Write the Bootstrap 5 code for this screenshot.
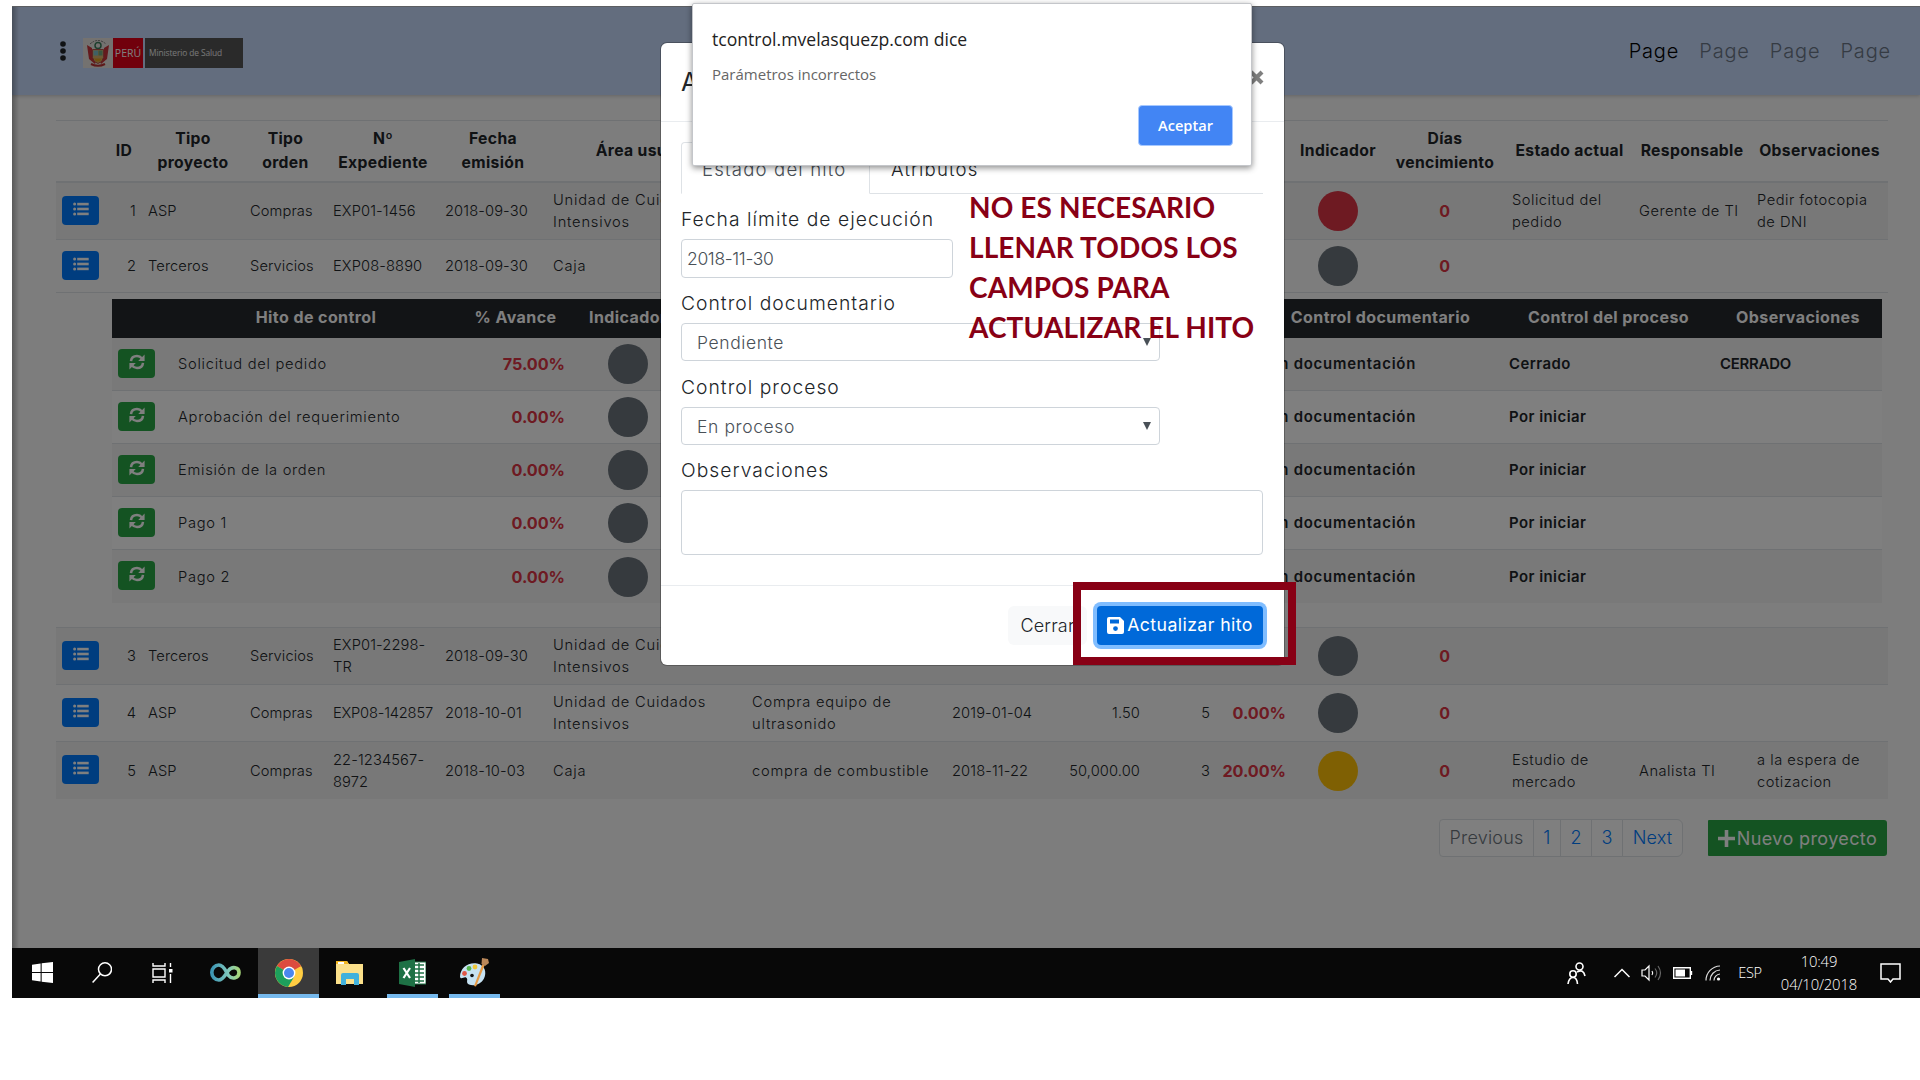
<!DOCTYPE html>
<html lang="es">
<head>
<meta charset="utf-8">
<meta name="viewport" content="width=device-width, initial-scale=1">
<title>Control de proyectos</title>
<link href="https://cdn.jsdelivr.net/npm/bootstrap@5.3.0/dist/css/bootstrap.min.css" rel="stylesheet">
<style>
:root{--ui:"Inter","Open Sans",sans-serif;--seg:"Open Sans","Noto Sans",sans-serif}
html,body{height:1080px;overflow:hidden}
body{background:#fff;font-family:var(--ui);font-weight:300;color:#212529}
.desk{margin:6px 0 0 12px;height:992px;position:relative}
.app{height:942px;background:#fafafa;position:relative;overflow:hidden;border-top:1px solid #b8bcc4}
.app::after{content:"";position:absolute;left:0;top:0;bottom:0;width:7px;background:linear-gradient(90deg,rgba(0,0,0,.28),transparent)}
.topbar{height:88px;background:#c6dafc;padding:0 29px 0 48px;box-shadow:0 1px 4px rgba(0,0,0,.2)}
.topbar .nav{gap:20px}
.topbar .nav-link{font-size:20px;letter-spacing:.85px;color:#6b7687;padding:0;line-height:30px;margin-top:0}
.topbar .nav-link.active{color:#000}
.brandbox{width:160px;height:30px;margin-left:17px;margin-top:3px}
.brandbox .esc{width:30px;background:#e8e4e0}
.brandbox .pe{width:30px;background:#e20018;color:#fff;font:400 10.5px var(--seg)}
.brandbox .min{width:98px;background:#555;color:#eee;font:400 8.4px var(--seg);letter-spacing:-.1px;padding-left:4px}
.main{padding:25px 32px 0 44px}
.grid{table-layout:fixed;width:1832px;margin:0;font-size:14.7px;line-height:22px;letter-spacing:.1px;border-collapse:separate;border-spacing:0;color:#212529}
.grid>thead>tr>th{height:63px;border-top:1px solid #dee2e6;border-bottom:2px solid #dee2e6;text-align:center;vertical-align:middle;font-weight:700;font-size:15.7px;line-height:24px;padding:0;white-space:nowrap;letter-spacing:.35px}
.grid>tbody>tr>td{height:57px;padding:0 6px;vertical-align:middle;white-space:nowrap;border-bottom:1px solid #dee2e6}
.grid>tbody>tr>td:nth-child(7),.grid>tbody>tr>td:nth-child(8){letter-spacing:.78px}
.grid>tbody>tr>td:nth-child(n+14){letter-spacing:.5px}
.grid>tbody>tr.r2>td{height:53px}
.grid>tbody>tr.odd>td{background:#f0f0f0}
.grid>tbody>tr:last-child>td{border-bottom:0}
.grid>tbody>tr.detail>td{height:335px;padding:6px 6px 0 56px;vertical-align:top}
.sub{table-layout:fixed;width:1770px;margin:0;border-collapse:separate;border-spacing:0;background:#fff;color:#212529}
.sub th{height:39px;background:#24282c;color:#fff;text-align:center;font-size:16px;font-weight:700;letter-spacing:.42px;padding:0 0 3px;white-space:nowrap}
.sub td{height:53px;padding:0 6px;vertical-align:middle;border-bottom:1px solid #dee2e6;white-space:nowrap}
.sub td:nth-child(2){letter-spacing:.72px}
.sub tr:last-child td{border-bottom:0}
.sub tbody tr:nth-child(odd) td{background:#f2f2f2}
.sub td.fw{font-weight:600;font-size:14.9px;letter-spacing:.48px}
.sub td.doc{letter-spacing:.8px}
.sub td.caps{letter-spacing:-.2px}
.pct{color:#dc3545!important;font-weight:700;font-size:16.2px;text-align:right;letter-spacing:-.05px}
.zero{color:#dc3545!important;font-weight:700;font-size:16px;text-align:center}
.dot{display:block;width:40px;height:40px;border-radius:50%;background:#6c757d;margin:0 auto}
.dot.red{background:#dc3545}.dot.yel{background:#ffc107}
.ibtn{display:flex;align-items:center;justify-content:center;width:37px;height:29px;padding:0 0 3px;margin-bottom:2px;border:0;border-radius:4px;background:#007bff;color:#fff}
.ibtn.grn{background:#28a745}
.pager{height:38px}
.pager .page-link{height:38px;padding:0 0;font-size:18px;line-height:36px;text-align:center;color:#007bff;background:#fff;border-color:#dee2e6;border-radius:0;letter-spacing:.2px}
.pager .disabled .page-link{color:#6c757d;background:#fff;border-radius:4px 0 0 4px}
.newbtn{width:179px;height:36px;margin-left:25px;background:#28a745;color:#fff;font-size:18px;letter-spacing:.38px;font-weight:400;border:0;border-radius:1px 3px 3px 1px;padding:0;gap:2px}
.shade{position:absolute;left:0;right:0;top:0;height:942px;background:rgba(0,0,0,.5)}
.hito{position:absolute;left:649px;top:37px;width:623px;height:622px;background:#fff;border-radius:6px;box-shadow:0 0 0 1px rgba(0,0,0,.25)}
.hito .top{height:79px;padding:0 20px;border-bottom:1px solid #e9ecef}
.hito .top h5{font-size:25px;font-weight:400}
.hito .body{height:463px;padding:20px 21px 0 20px}
.tabs{height:52px;border-bottom:1px solid #dee2e6}
.tabs .nav-link{height:52px;padding:11px 20px 0;line-height:30px;font-size:18.6px;letter-spacing:1.15px;color:#212529;border-radius:4px 4px 0 0;white-space:nowrap}
.tabs .nav-link.active{width:189px;color:#495057;border-color:#dee2e6 #dee2e6 #fff}
.hito label{display:block;font-size:19.3px;letter-spacing:1.02px;line-height:30px;color:#212529;white-space:nowrap}
.hito .ctl{border:1px solid #ced4da;border-radius:4px;color:#495057;font-size:17.5px;letter-spacing:.6px;height:39px;padding:0 5px;line-height:37px;background:#fff}
.hito .date{width:272px;letter-spacing:-.35px}
.hito .sel{width:479px;padding:0 8px 0 15px;height:38px}
.hito .foot{height:79px;border-top:1px solid #e9ecef;padding:1px 21px 0 0;gap:10px}
.cer{width:79px;height:39px;background:#f8f9fa;border:0;padding:0;font-size:18px;letter-spacing:.2px;font-weight:300;color:#212529}
.act{width:166px;height:39px;background:#0069d9;border:0;padding:0;color:#fff;font-size:17.7px;letter-spacing:.42px;font-weight:400;border-radius:4px;box-shadow:0 0 0 4px #80bdff;white-space:nowrap;gap:3px}
.mark-box{position:absolute;left:1061px;top:576px;width:223px;height:83px;border:8px solid #880015}
.note{position:absolute;left:957px;top:181px;font:700 28px/40px Lato,sans-serif;letter-spacing:.12px;color:#880015;white-space:nowrap}
.alertbox{position:absolute;left:680px;top:-3px;width:560px;height:163px;background:#fff;border:1px solid #c4c6ca;border-radius:2px;box-shadow:0 2px 6px rgba(0,0,0,.45);font-family:var(--seg);padding:20px 18px 18px 19px}
.alertbox .host{font-size:17.6px;line-height:30px;font-weight:400;color:#222}
.alertbox .msg{font-size:15px;line-height:24px;font-weight:400;color:#666;margin-top:8px}
.alertbox .ok{width:95px;height:41px;background:#4285f4;border:1px solid #a6c8ff;border-radius:4px;color:#fff;font-size:14.6px;font-weight:600;padding:0;margin-top:19px}
.taskbar{height:50px;background:#080808;color:#fff;font-family:var(--seg)}
.taskbar svg{display:block}
.tk{width:62px;height:50px;display:flex;align-items:center;justify-content:center;border-bottom:4px solid transparent;padding-top:3px}
.tk.cur{background:#3a3a3a;border-color:#76b9ed}
.tray{padding-right:19px}
.clock{font-size:14.8px;line-height:23px;text-align:center;letter-spacing:-.15px}
</style>
<script src="https://cdn.jsdelivr.net/npm/bootstrap@5.3.0/dist/js/bootstrap.bundle.min.js"></script>
</head>
<body>
<svg width="0" height="0" class="d-none">
<symbol id="list" viewBox="0 0 16 14"><g fill="currentColor"><circle cx="1.6" cy="2" r="1.5"/><circle cx="1.6" cy="7" r="1.5"/><circle cx="1.6" cy="12" r="1.5"/><rect x="4.2" y=".8" width="11.5" height="2.6"/><rect x="4.2" y="5.7" width="11.5" height="2.6"/><rect x="4.2" y="10.6" width="11.5" height="2.6"/></g></symbol>
<symbol id="sync" viewBox="0 0 16 16"><g fill="none" stroke="currentColor" stroke-width="2.5"><path d="M2 7.200Q2.500 2 8 2q3 0 5 2.500"/><path d="M14 8.800Q13.500 14 8 14q-3 0-5-2.500"/></g><path fill="currentColor" d="M15.600.6v6.400H9.200zM.4 15.400V9h6.400z"/></symbol>
</svg>
<div class="desk">
  <div class="app">
    <nav class="topbar d-flex align-items-center">
      <svg width="6" height="20" viewBox="0 0 6 20" fill="#212529"><circle cx="3" cy="3" r="2.8"/><circle cx="3" cy="10" r="2.8"/><circle cx="3" cy="17" r="2.8"/></svg>
      <div class="brandbox d-flex">
        <div class="esc d-flex align-items-center justify-content-center">
          <svg width="24" height="28" viewBox="0 0 24 28"><path d="M4 5Q12-2 20 5" fill="none" stroke="#777" stroke-width="1" stroke-dasharray="2 1"/><path d="M1 6l5 3v9l4 4-1 3-6-5zM23 6l-5 3v9l-4 4 1 3 6-5z" fill="#c8343a"/><circle cx="12" cy="6.500" r="3" fill="none" stroke="#3b7d5b" stroke-width="1.5"/><path d="M6.500 10.500h11v8q-1 5-5.500 6-4.500-1-5.500-6z" fill="#d8b06a" stroke="#a33" stroke-width=".8"/><path d="M7.500 11.500H12v5H7.500z" fill="#7fc0c8"/><path d="M12.500 11.500h4v5h-4z" fill="#6ea87e"/><path d="M8 19.500h8l-2 3h-4z" fill="#e0a020"/><path d="M5 25q7 3.500 14 0" fill="none" stroke="#b33" stroke-width="2"/></svg>
        </div>
        <div class="pe d-flex align-items-center justify-content-center">PERÚ</div>
        <div class="min d-flex align-items-center ms-auto">Ministerio de Salud</div>
      </div>
      <div class="nav ms-auto"><a class="nav-link active">Page</a><a class="nav-link">Page</a><a class="nav-link">Page</a><a class="nav-link">Page</a></div>
    </nav>
    <main class="main">
      <table class="grid">
        <colgroup><col style="width:50px"><col style="width:36px"><col style="width:102px"><col style="width:83px"><col style="width:112px"><col style="width:108px"><col style="width:199px"><col style="width:200px"><col style="width:108px"><col style="width:92px"><col style="width:70px"><col style="width:76px"><col style="width:92px"><col style="width:122px"><col style="width:127px"><col style="width:118px"><col style="width:137px"></colgroup>
        <thead><tr><th></th><th>ID</th><th>Tipo<br>proyecto</th><th>Tipo<br>orden</th><th>Nº<br>Expediente</th><th>Fecha<br>emisión</th><th>Área usuaria</th><th></th><th></th><th></th><th></th><th>%<br>Avance</th><th>Indicador</th><th>Días<br>vencimiento</th><th>Estado actual</th><th>Responsable</th><th>Observaciones</th></tr></thead>
        <tbody>
          <tr class="odd"><td><button class="ibtn"><svg width="16" height="14"><use href="#list"/></svg></button></td><td class="text-end">1</td><td>ASP</td><td>Compras</td><td>EXP01-1456</td><td>2018-09-30</td><td>Unidad de Cuidados<br>Intensivos</td><td></td><td></td><td></td><td></td><td></td><td><span class="dot red"></span></td><td class="zero">0</td><td>Solicitud del<br>pedido</td><td>Gerente de TI</td><td>Pedir fotocopia<br>de DNI</td></tr>
          <tr class="r2"><td><button class="ibtn"><svg width="16" height="14"><use href="#list"/></svg></button></td><td class="text-end">2</td><td>Terceros</td><td>Servicios</td><td>EXP08-8890</td><td>2018-09-30</td><td>Caja</td><td></td><td></td><td></td><td></td><td></td><td><span class="dot"></span></td><td class="zero">0</td><td></td><td></td><td></td></tr>
          <tr class="detail"><td colspan="17">
            <table class="sub">
              <colgroup><col style="width:60px"><col style="width:288px"><col style="width:111px"><col style="width:114px"><col style="width:573px"><col style="width:245px"><col style="width:211px"><col style="width:168px"></colgroup>
              <thead><tr><th></th><th>Hito de control</th><th>% Avance</th><th>Indicador</th><th></th><th>Control documentario</th><th>Control del proceso</th><th>Observaciones</th></tr></thead>
              <tbody>
                <tr><td><button class="ibtn grn"><svg width="16" height="16"><use href="#sync"/></svg></button></td><td>Solicitud del pedido</td><td class="pct">75.00%</td><td><span class="dot"></span></td><td></td><td class="fw doc">Sin documentación</td><td class="fw">Cerrado</td><td class="fw caps">CERRADO</td></tr>
                <tr><td><button class="ibtn grn"><svg width="16" height="16"><use href="#sync"/></svg></button></td><td>Aprobación del requerimiento</td><td class="pct">0.00%</td><td><span class="dot"></span></td><td></td><td class="fw doc">Sin documentación</td><td class="fw">Por iniciar</td><td></td></tr>
                <tr><td><button class="ibtn grn"><svg width="16" height="16"><use href="#sync"/></svg></button></td><td>Emisión de la orden</td><td class="pct">0.00%</td><td><span class="dot"></span></td><td></td><td class="fw doc">Sin documentación</td><td class="fw">Por iniciar</td><td></td></tr>
                <tr><td><button class="ibtn grn"><svg width="16" height="16"><use href="#sync"/></svg></button></td><td>Pago 1</td><td class="pct">0.00%</td><td><span class="dot"></span></td><td></td><td class="fw doc">Sin documentación</td><td class="fw">Por iniciar</td><td></td></tr>
                <tr><td><button class="ibtn grn"><svg width="16" height="16"><use href="#sync"/></svg></button></td><td>Pago 2</td><td class="pct">0.00%</td><td><span class="dot"></span></td><td></td><td class="fw doc">Sin documentación</td><td class="fw">Por iniciar</td><td></td></tr>
              </tbody>
            </table>
          </td></tr>
          <tr class="odd"><td><button class="ibtn"><svg width="16" height="14"><use href="#list"/></svg></button></td><td class="text-end">3</td><td>Terceros</td><td>Servicios</td><td>EXP01-2298-<br>TR</td><td>2018-09-30</td><td>Unidad de Cuidados<br>Intensivos</td><td></td><td></td><td></td><td></td><td></td><td><span class="dot"></span></td><td class="zero">0</td><td></td><td></td><td></td></tr>
          <tr><td><button class="ibtn"><svg width="16" height="14"><use href="#list"/></svg></button></td><td class="text-end">4</td><td>ASP</td><td>Compras</td><td style="letter-spacing:-.2px">EXP08-142857</td><td>2018-10-01</td><td>Unidad de Cuidados<br>Intensivos</td><td>Compra equipo de<br>ultrasonido</td><td>2019-01-04</td><td class="text-end">1.50</td><td class="text-end">5</td><td class="pct">0.00%</td><td><span class="dot"></span></td><td class="zero">0</td><td></td><td></td><td></td></tr>
          <tr class="odd"><td><button class="ibtn"><svg width="16" height="14"><use href="#list"/></svg></button></td><td class="text-end">5</td><td>ASP</td><td>Compras</td><td>22-1234567-<br>8972</td><td>2018-10-03</td><td>Caja</td><td>compra de combustible</td><td>2018-11-22</td><td class="text-end">50,000.00</td><td class="text-end">3</td><td class="pct">20.00%</td><td><span class="dot yel"></span></td><td class="zero">0</td><td>Estudio de<br>mercado</td><td>Analista TI</td><td>a la espera de<br>cotizacion</td></tr>
        </tbody>
      </table>
      <div class="d-flex justify-content-end align-items-center" style="padding:20px 1px 0 0">
        <ul class="pagination pager mb-0">
          <li class="page-item disabled"><a class="page-link" style="width:95px">Previous</a></li><li class="page-item"><a class="page-link" style="width:28px">1</a></li><li class="page-item"><a class="page-link" style="width:32px">2</a></li><li class="page-item"><a class="page-link" style="width:32px">3</a></li><li class="page-item"><a class="page-link" style="width:61px">Next</a></li>
        </ul>
        <button class="btn newbtn d-flex align-items-center justify-content-center"><svg width="17" height="17" viewBox="0 0 17 17" stroke="#fff" stroke-width="3.6"><path d="M8.5 0v17M0 8.5h17"/></svg>Nuevo proyecto</button>
      </div>
    </main>
  </div>
  <div class="shade"></div>
  <section class="hito">
    <div class="top d-flex align-items-center justify-content-between"><h5 class="mb-0">Actualizar hito</h5><svg width="15" height="15" viewBox="0 0 15 15" stroke="#7f7f7f" stroke-width="4.2" style="margin:-9px 0 0"><path d="M2 2l11 11M13 2L2 13"/></svg></div>
    <div class="body">
      <div class="tabs nav nav-tabs flex-nowrap"><a class="nav-link active">Estado del hito</a><a class="nav-link">Atributos</a></div>
      <label style="margin:10px 0 5px">Fecha límite de ejecución</label>
      <div class="ctl date">2018-11-30</div>
      <label style="margin:10px 0 5px">Control documentario</label>
      <div class="ctl sel d-flex justify-content-between"><span>Pendiente</span><svg width="8" height="8" viewBox="0 0 8 8" class="align-self-center"><path d="M0 0h8L4 8z" fill="#495057"/></svg></div>
      <label style="margin:11px 0 5px">Control proceso</label>
      <div class="ctl sel d-flex justify-content-between"><span>En proceso</span><svg width="8" height="8" viewBox="0 0 8 8" class="align-self-center"><path d="M0 0h8L4 8z" fill="#495057"/></svg></div>
      <label style="margin:10px 0 5px">Observaciones</label>
      <div class="ctl" style="height:65px"></div>
    </div>
    <div class="foot d-flex align-items-center justify-content-end"><button class="btn cer">Cerrar</button><button class="act d-flex align-items-center justify-content-center"><svg width="17" height="17" viewBox="0 0 17 17"><path fill="#fff" fill-rule="evenodd" d="M2 0h11l4 4v11a2 2 0 0 1-2 2H2a2 2 0 0 1-2-2V2a2 2 0 0 1 2-2zM3 2.6v4h9v-4zM8.5 9.2a2.4 2.4 0 1 0 0 4.8 2.4 2.4 0 0 0 0-4.8z"/></svg>Actualizar hito</button></div>
  </section>
  <div class="mark-box"></div>
  <div class="note">NO ES NECESARIO<br>LLENAR TODOS LOS<br>CAMPOS PARA<br>ACTUALIZAR EL HITO</div>
  <div class="alertbox"><div class="host">tcontrol.mvelasquezp.com dice</div><div class="msg">Parámetros incorrectos</div><button class="ok d-block ms-auto">Aceptar</button></div>
  <div class="taskbar d-flex align-items-center">
    <div class="tk" style="width:60px"><svg width="21" height="21" viewBox="0 0 20 20" fill="#fff"><path d="M0 2.6l8.2-1.1v8H0zM9.2 1.3L20 0v9.5H9.2zM0 10.5h8.2v8L0 17.4zM9.2 10.5H20V20L9.2 18.7z"/></svg></div>
    <div class="tk" style="width:60px"><svg width="20" height="21" viewBox="0 0 20 21" fill="none" stroke="#fff" stroke-width="1.5"><circle cx="13" cy="7.3" r="6.5"/><path d="M8.4 12L.6 20.4"/></svg></div>
    <div class="tk" style="width:60px"><svg width="21" height="20" viewBox="0 0 21 20" fill="none" stroke="#fff" stroke-width="1.4"><path d="M1 0v3h12V0M1 20v-3h12v3M1 6h12v8H1zM18.500 0v4M18.500 11v9"/><path d="M17 6h3.500v3.500H17z" fill="#fff" stroke="none"/></svg></div>
    <div class="tk" style="width:66px"><svg width="31" height="19" viewBox="0 0 31 19"><defs><linearGradient id="inf"><stop stop-color="#3c96b4"/><stop offset=".6" stop-color="#7fc7bd"/><stop offset="1" stop-color="#a6d67a"/></linearGradient></defs><path d="M16 11C13 15.500 11.500 17 8.800 17A7 7.500 0 0 1 8.800 2C14 2 16 9 18.500 12.500C22 17 29 15 29 9.500C29 4 22 3 18.500 7.500L16 11" fill="none" stroke="url(#inf)" stroke-width="3.6"/></svg></div>
    <div class="tk cur" style="width:61px"><svg width="28" height="28" viewBox="0 0 28 28"><circle cx="14" cy="14" r="14" fill="#ffcd42"/><path d="M14 14L1.900 7A14 14 0 0 1 26.100 7z" fill="#dc4b3e"/><path d="M26.100 7H14V10z" fill="#dc4b3e"/><path d="M1.900 7A14 14 0 0 0 13 28L19 18 14 14z" fill="#1da05c"/><circle cx="14" cy="14" r="6.400" fill="#fff"/><circle cx="14" cy="14" r="5" fill="#4a87ee"/></svg></div>
    <div class="tk"><svg width="28" height="25" viewBox="0 0 28 25"><path d="M0 1h11l2 3h14v20H0z" fill="#fbe08a"/><path d="M0 1h11l1.500 3H0z" fill="#f1b51f"/><path d="M2 2h6v2H2z" fill="#fff"/><path d="M5 24V15q0-2 2-2h14q2 0 2 2v10h-5v-6h-8v6H5z" fill="#41b1dc"/></svg></div>
    <div style="width:62px" class="d-flex justify-content-center"><div class="tk" style="width:51px;border-color:#76b9ed"><svg width="27" height="28" viewBox="0 0 27 28"><path d="M12 3h15v22H12z" fill="#fff" stroke="#1e7145"/><path d="M15 6h10M15 10h10M15 14h10M15 18h10M15 22h10M20 4v20" stroke="#1e7145" stroke-width="1.500"/><path d="M0 3L16 0v28L0 25z" fill="#1e7145"/><path d="M4.500 9l6.500 10M11 9L4.500 19" stroke="#fff" stroke-width="2.200"/></svg></div></div>
    <div style="width:62px" class="d-flex justify-content-center"><div class="tk" style="width:51px;border-color:#76b9ed"><svg width="30" height="29" viewBox="0 0 30 29"><path d="M1 19C1 10 9 4 18 5.500c8 1.500 10 9 7 15-3 6-10 8-15 6-4-2 0-5.500-3-7-2-1-5 2.500-6-.5z" fill="#c6e2f2"/><circle cx="5.500" cy="15.500" r="2.400" fill="#e05545"/><circle cx="10" cy="10.500" r="2.400" fill="#57b54d"/><circle cx="16" cy="9" r="2.400" fill="#eec63a"/><circle cx="13" cy="17.500" r="1.800" fill="#111"/><path d="M15 28L23.500 6l2.200 1L17 28.500z" fill="#e69a45"/><path d="M23 0l6 1 1 4-4 3-3.500-2z" fill="#b98759"/></svg></div></div>
    <div class="tray d-flex align-items-center ms-auto">
      <svg width="19" height="23" viewBox="0 0 19 23" fill="none" stroke="#fff" stroke-width="1.600"><circle cx="6" cy="12" r="3.200"/><path d="M1 22q1-6.500 5-6.500t4.500 6.500"/><circle cx="12.500" cy="4.500" r="3.500"/><path d="M10 10q6.500-3.500 8 4"/></svg>
      <svg width="16" height="10" viewBox="0 0 16 10" fill="none" stroke="#fff" stroke-width="1.500" style="margin-left:28px"><path d="M.5 9L8 1.500 15.500 9"/></svg>
      <svg width="22" height="18" viewBox="0 0 22 18" fill="none" stroke="#fff" stroke-width="1.200" style="margin-left:11px"><path d="M1 6h3l4-4v14l-4-4H1z"/><path d="M11 7q1.500 2 0 4"/><path d="M14 4.500q3.500 4.500 0 9M17 2q5 7 0 14" stroke="#666"/></svg>
      <svg width="20" height="12" viewBox="0 0 20 12" style="margin-left:10px"><path d="M.7.7h16.600v10.600H.7zM18.500 4v4" fill="none" stroke="#fff" stroke-width="1.400"/><path d="M2.500 2.500h9.500v7H2.500z" fill="#fff"/></svg>
      <svg width="16" height="16" viewBox="0 0 16 16" fill="none" stroke="#ddd" stroke-width="1.200" style="margin-left:12px"><path d="M1 15.500A14.500 14.500 0 0 1 15 1M5 15.500A10.500 10.500 0 0 1 15 5M9 15.500A6.500 6.500 0 0 1 15 9"/><circle cx="13.500" cy="14" r="1.600" fill="#fff" stroke="none"/></svg>
      <span style="font-size:14.6px;margin-left:17px;letter-spacing:-.3px">ESP</span>
      <div class="clock" style="margin-left:19px">10:49<br>04/10/2018</div>
      <svg width="21" height="20" viewBox="0 0 21 20" fill="none" stroke="#fff" stroke-width="1.500" style="margin-left:23px"><path d="M1 1h19v15h-7l-2.500 3L8 16H1z"/></svg>
    </div>
  </div>
</div>
</body>
</html>
